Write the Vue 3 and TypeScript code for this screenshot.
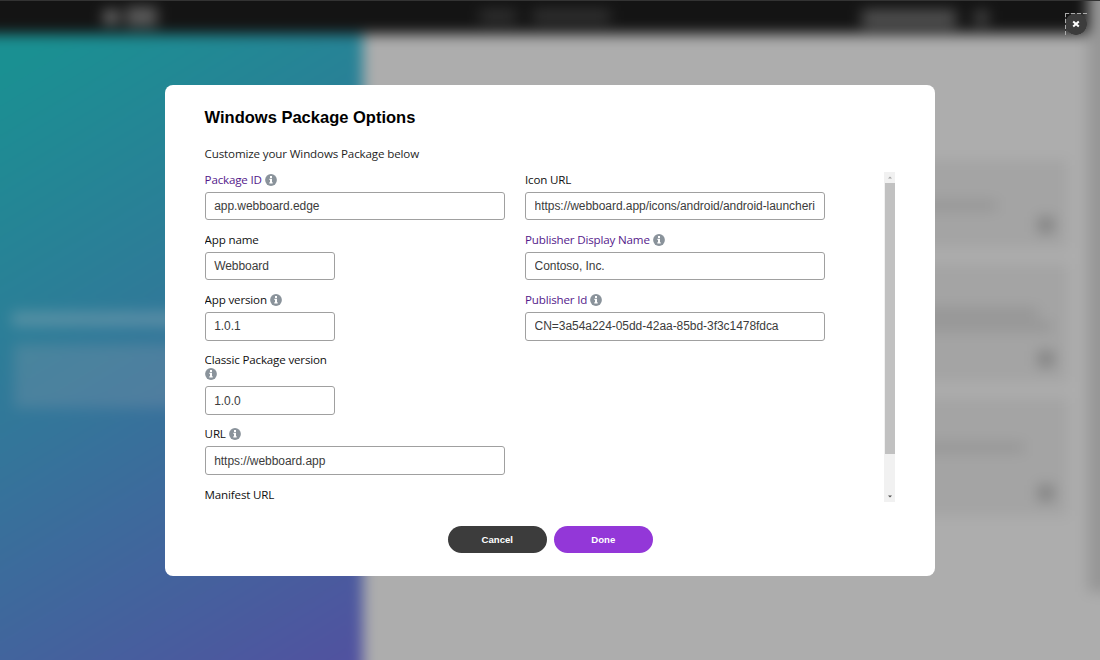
<script setup lang="ts">
import { ref } from 'vue'

interface Field {
  id: string
  label: string
  info?: boolean
  link?: boolean
  narrow?: boolean
}

const values = ref<Record<string, string>>({
  packageId: 'app.webboard.edge',
  appName: 'Webboard',
  version: '1.0.1',
  classic: '1.0.0',
  url: 'https://webboard.app',
  icon: 'https://webboard.app/icons/android/android-launcheri',
  publisher: 'Contoso, Inc.',
  publisherId: 'CN=3a54a224-05dd-42aa-85bd-3f3c1478fdca',
  manifest: '',
})

const columns: Field[][] = [
  [
    { id: 'packageId', label: 'Package ID', info: true, link: true },
    { id: 'appName', label: 'App name', narrow: true },
    { id: 'version', label: 'App version', info: true, narrow: true },
    { id: 'classic', label: 'Classic Package version', info: true, narrow: true },
    { id: 'url', label: 'URL', info: true },
    { id: 'manifest', label: 'Manifest URL' },
  ],
  [
    { id: 'icon', label: 'Icon URL' },
    { id: 'publisher', label: 'Publisher Display Name', info: true, link: true },
    { id: 'publisherId', label: 'Publisher Id', info: true, link: true },
  ],
]
</script>

<template>
  <div class="screen">
    <div class="page" aria-hidden="true">
      <div class="header">
        <i class="logo-a"></i><i class="logo-b"></i>
        <i class="nav-a"></i><i class="nav-b"></i>
        <i class="pill"></i><i class="dot"></i>
      </div>
      <div class="body">
        <div class="side">
          <i class="headline"></i>
          <i class="copy"></i>
        </div>
        <div class="main">
          <div class="card c1"><i class="line"></i><i class="mark"></i></div>
          <div class="card c2"><i class="line"></i><i class="line wide"></i><i class="mark"></i></div>
          <div class="card c3"><i class="line"></i><i class="mark"></i></div>
        </div>
      </div>
      <div class="rail"></div>
    </div>
    <div class="topline"></div>

    <button class="close" aria-label="Close">
      <svg viewBox="0 0 8 8"><path d="M1.2 1.5 6.8 6.5M6.8 1.5 1.2 6.5" /></svg>
    </button>

    <section class="modal">
      <h1>Windows Package Options</h1>
      <p class="intro">Customize your Windows Package below</p>
      <div class="scroller">
        <div class="columns">
          <div v-for="(col, c) in columns" :key="c" class="column">
            <div v-for="f in col" :key="f.id" class="field" :class="{ narrow: f.narrow }">
              <label :for="f.id" :class="{ link: f.link }">{{ f.label }}
                <svg v-if="f.info" class="info" viewBox="0 0 12 12">
                  <circle cx="6" cy="6" r="5.9" fill="#8a939b" />
                  <path fill="#fff" d="M5 2.1h2v1.8H5zM4.4 4.8H7v3.5h.7v1.2H4.3V8.3H5V6h-.6z" />
                </svg>
              </label>
              <input :id="f.id" v-model="values[f.id]" type="text" spellcheck="false" />
            </div>
          </div>
        </div>
        <div class="bar">
          <svg class="arrow up" viewBox="0 0 4 3"><path d="M0 2.5 2 .5l2 2z" /></svg>
          <div class="thumb"></div>
          <svg class="arrow" viewBox="0 0 4 3"><path d="M0 .5 2 2.5l2-2z" /></svg>
        </div>
      </div>
      <div class="actions">
        <button class="cancel">Cancel</button>
        <button class="done">Done</button>
      </div>
    </section>
  </div>
</template>

<style>
html, body { overflow: hidden; background: #adadad; }
</style>

<style scoped>
* { box-sizing: border-box; }
.screen {
  position: relative;
  width: 1100px;
  height: 660px;
  overflow: hidden;
  font-family: "Open Sans", "Noto Sans", sans-serif;
}
/* blurred page: extends 30px past the window so its edges stay opaque */
.page {
  position: absolute;
  inset: -30px;
  display: flex;
  flex-direction: column;
  background: #adadad;
  filter: blur(7px);
}
.page i { position: absolute; display: block; }
.header { position: relative; height: 64px; margin-right: 42px; background: #141414; }
.logo-a { left: 134px; top: 41px; width: 14px; height: 12px; background: #808080; }
.logo-b { left: 156px; top: 37px; width: 31px; height: 19px; background: #5c5c5c; }
.nav-a { left: 510px; top: 40px; width: 36px; height: 12px; background: #323232; }
.nav-b { left: 563px; top: 40px; width: 77px; height: 12px; background: #343434; }
.pill { left: 892px; top: 40px; width: 94px; height: 17px; background: #525252; }
.dot { left: 1005px; top: 41px; width: 13px; height: 13px; background: #4c4c4c; }
.body { display: flex; flex: 1; }
.side {
  position: relative;
  width: 393px;
  background: linear-gradient(149deg, #1a9092 6%, #34759a 50%, #534fa0 100%);
}
.headline { left: 42px; top: 278px; width: 180px; height: 14px; background: rgba(155, 175, 185, .4); }
.copy { left: 44px; top: 310px; width: 180px; height: 64px; background: rgba(150, 160, 175, .26); }
.main { position: relative; flex: 1; padding: 126px 0 0; }
.card { position: relative; width: 705px; margin-bottom: 16px; background: #a4a4a4; }
.c1 { height: 88px; }
.c2 { height: 118px; }
.c3 { height: 118px; }
.line { right: 71px; top: 41px; width: 160px; height: 9px; background: #949494; }
.c2 .line { right: 30px; top: 44px; height: 10px; }
.c2 .line.wide { right: 16px; top: 58px; height: 9px; }
.c3 .line { right: 44px; top: 45px; }
.mark { right: 14px; bottom: 15px; width: 16px; height: 16px; background: #828282; }
.rail { position: absolute; right: 0; top: 0; width: 42px; height: 622px; background: #969696; }
.topline { position: absolute; left: 0; right: 0; top: 0; height: 1px; background: #333; }

.close {
  position: absolute;
  left: 1065px;
  top: 13px;
  width: 22px;
  height: 22px;
  padding: 0;
  border: 0;
  background:
    repeating-linear-gradient(90deg, #aaa 0 4px, #333 4px 6px) 0 0 / 100% 1px no-repeat,
    repeating-linear-gradient(#aaa 0 4px, #333 4px 6px) 0 0 / 1px 100% no-repeat,
    radial-gradient(circle at 50% 50%, #3c3c3c 10.5px, transparent 11px);
}
.close svg { display: block; width: 8px; height: 8px; margin: 0 auto; }
.close path { stroke: #fff; stroke-width: 2; fill: none; }

.modal {
  position: relative;
  width: 770px;
  height: 491.5px;
  margin: 84.5px auto 0;
  padding: 21.5px 40px 0 39.6px;
  border-radius: 8px;
  background: #fff;
}
h1 {
  margin: 0 0 17.5px;
  font: bold 16.5px/22px "Liberation Sans", Arial, sans-serif;
  color: #000;
}
.intro {
  height: 16px;
  margin: 0;
  font-size: 11.6px;
  letter-spacing: -0.14px;
  line-height: 16px;
  color: #1f1f1f;
}
.scroller { display: flex; justify-content: space-between; height: 330px; margin-top: 10px; overflow: hidden; }
.columns { display: flex; gap: 20px; padding-top: 1.1px; }
.column { width: 300.4px; }
.field { width: 300.4px; margin-bottom: 12.5px; }
.narrow { width: 130.6px; }
label {
  display: block;
  margin-bottom: 5px;
  font-size: 11.6px;
  letter-spacing: -0.17px;
  line-height: 14px;
  color: #111;
}
label.link { color: #551a8b; }
.info { width: 12px; height: 12px; vertical-align: -2px; }
input {
  display: block;
  width: 100%;
  height: 28.7px;
  padding: 0 8px 0 8.6px;
  border: 1px solid #a0a0a0;
  border-radius: 3px;
  outline: 0;
  font: 12px "Liberation Sans", Arial, sans-serif;
  letter-spacing: -0.05px;
  color: #3c3c3c;
  background: #fff;
}
.bar {
  display: flex;
  flex-direction: column;
  justify-content: space-between;
  align-items: center;
  width: 11px;
  padding-bottom: 4px;
  background: #f1f1f1;
}
.arrow { width: 4px; height: 3px; fill: #505050; }
.arrow.up { margin-top: 4px; fill: #a3a3a3; }
.thumb { width: 10px; height: 271px; margin: 4px 0 auto; background: #c1c1c1; }
.actions { display: flex; justify-content: center; gap: 6.8px; margin: 24px -1px 0 0; }
.actions button {
  width: 99.2px;
  height: 27px;
  padding: 0;
  border: 0;
  border-radius: 14px;
  font: bold 9.6px "Liberation Sans", Arial, sans-serif;
  color: #fff;
}
.cancel { background: #3c3c3c; }
.done { background: #9337d8; }
</style>
